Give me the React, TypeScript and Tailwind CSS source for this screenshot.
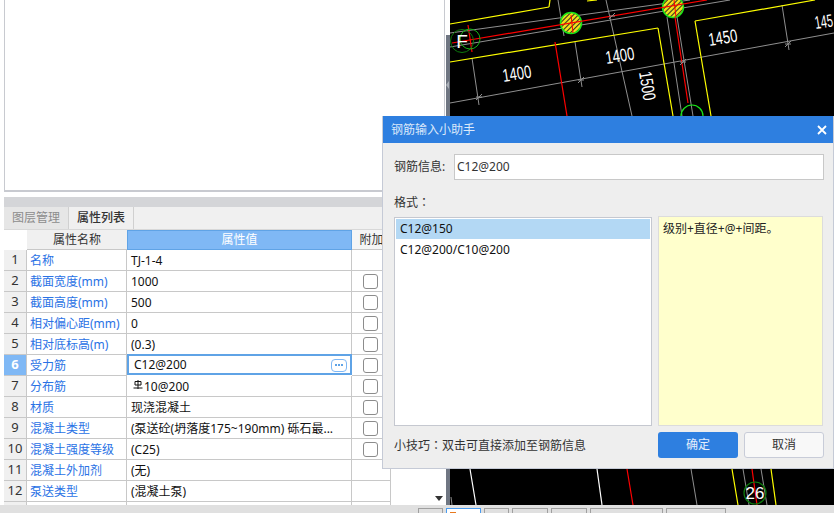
const font = { fontFamily: '"Noto Sans", "Noto Sans CJK SC", sans-serif' };

const rows: [string, string, boolean][] = [
  ["名称", "TJ-1-4", false],
  ["截面宽度(mm)", "1000", true],
  ["截面高度(mm)", "500", true],
  ["相对偏心距(mm)", "0", true],
  ["相对底标高(m)", "(0.3)", true],
  ["受力筋", "C12@200", true],
  ["分布筋", "10@200", true],
  ["材质", "现浇混凝土", true],
  ["混凝土类型", "(泵送砼(坍落度175~190mm) 砾石最...", true],
  ["混凝土强度等级", "(C25)", true],
  ["混凝土外加剂", "(无)", false],
  ["泵送类型", "(混凝土泵)", false],
];

function Canvas() {
  const L = (c: string, p: number[], w = 1) => (
    <line x1={p[0]} y1={p[1]} x2={p[2]} y2={p[3]} stroke={c} strokeWidth={w} />
  );
  const yellow = [
    [450, 24, 549, 7], [549, 7, 550, 0], [587, 1, 597, 0], [450, 62, 658, 28], [658, 28, 673, 116],
    [695, 21, 815, 0], [695, 21, 711, 116], [732, 469, 738, 505], [771, 469, 776, 505],
  ];
  const gray = [
    [450, 33, 690, 0], [450, 47, 730, 0], [450, 103, 834, 33], [472, 58, 479, 105], [575, 42, 582, 87],
    [606, 0, 632, 116], [782, 5, 789, 50], [667, 17, 682, 116], [677, 17, 693, 116], [558, 0, 564, 36],
    [691, 469, 697, 505], [743, 469, 749, 505], [761, 469, 767, 505], [451, 497, 452, 505],
  ];
  const red = [
    [452, 43, 707, 0], [555, 42, 567, 116], [675, 17, 688, 103], [468, 25, 472, 52], [627, 469, 633, 505], [752, 469, 757, 505],
  ];
  const white = [[470, 469, 476, 505], [597, 469, 602, 505]];
  const nums: [string, number, number, number, number][] = [
    ["1400", 517, 75, -9, 29],
    ["1400", 620, 57, -9, 29],
    ["1450", 723, 39, -9, 29],
    ["1500", 646, 86, 81, 29],
    ["145", 824, 23, -9, 18],
  ];
  return (
    <svg className="absolute left-0 top-0" width="834" height="505" viewBox="0 0 834 505">
      <defs>
        <pattern id="hatch" width="3.5" height="3.5" patternUnits="userSpaceOnUse" patternTransform="rotate(-45)">
          <rect width="3.5" height="3.5" fill="#222" />
          <rect width="3.5" height="2.5" fill="#f2e21a" />
        </pattern>
      </defs>
      <rect x="450" y="0" width="384" height="505" fill="#000" />
      {gray.map((p, i) => <g key={i}>{L("#8f8f8f", p)}</g>)}
      {yellow.map((p, i) => <g key={i}>{L("#ffff00", p, 1.2)}</g>)}
      {white.map((p, i) => <g key={i}>{L("#ffffff", p, 1.2)}</g>)}
      <circle cx="571" cy="23" r="10.5" fill="url(#hatch)" stroke="#19e619" strokeWidth="1.5" />
      <circle cx="673" cy="7" r="10.5" fill="url(#hatch)" stroke="#19e619" strokeWidth="1.5" />
      {red.map((p, i) => <g key={i}>{L("#ff0000", p, 1.2)}</g>)}
      <line x1="571" y1="15" x2="573" y2="33" stroke="#ff0000" />
      <line x1="674" y1="0" x2="676" y2="17" stroke="#ff0000" />
      <circle cx="462" cy="41" r="11.5" fill="none" stroke="#0d7a0d" />
      <circle cx="470" cy="39" r="10" fill="none" stroke="#16b016" />
      <circle cx="692" cy="116" r="11" fill="none" stroke="#19e619" strokeWidth="1.2" />
      <circle cx="755" cy="493" r="11" fill="none" stroke="#0d7a0d" strokeWidth="1.2" />
      <text x="462" y="48" fontSize="19" fill="#fff" textAnchor="middle" fontFamily="Liberation Sans">F</text>
      <text x="755" y="499" fontSize="17" fill="#fff" textAnchor="middle" fontFamily="Liberation Sans">26</text>
      {nums.map(([t, x, y, r, w], i) => (
        <text key={i} transform={`translate(${x} ${y}) rotate(${r})`} fontSize="18" fill="#fff" textAnchor="middle" dominantBaseline="middle" textLength={w} lengthAdjust="spacingAndGlyphs" fontFamily="Liberation Sans">{t}</text>
      ))}
      {[[479, 97], [581, 80], [683, 62], [788, 44], [612, 16]].map(([x, y], i) => (
        <g key={i} stroke="#8f8f8f">
          <line x1={x - 3} y1={y + 3} x2={x + 3} y2={y - 3} />
          <line x1={x - 3} y1={y} x2={x + 3} y2={y} />
        </g>
      ))}
    </svg>
  );
}

function Rebar() {
  return (
    <svg width="10" height="10" viewBox="0 0 10 10" className="ml-[2px] mr-px shrink-0 -translate-y-[2px]" fill="none" stroke="#111" strokeWidth="1">
      <path d="M2 1.5v3.5h6v-3.5z" />
      <path d="M5 0v9M0.5 8h9" />
    </svg>
  );
}

function Row({ r, i }: { r: [string, string, boolean]; i: number }) {
  const active = i === 5;
  return (
    <div className="grid h-[21px] shrink-0 grid-cols-[23px_100px_225px_39px]">
      <div className={`flex items-center justify-center border-b border-r border-[#c8c8c8] text-[13px] ${active ? "bg-[#7fb8f5] font-bold text-white" : "bg-[#f0f0f0] text-[#333]"}`}>{i + 1}</div>
      <div className="flex items-center overflow-hidden whitespace-nowrap border-b border-r border-[#c8c8c8] pl-[3px] pt-px text-[#2a72e5]">{r[0]}</div>
      {active ? (
        <div className="-mt-px flex h-[21px] items-center justify-between border-2 border-[#5fa3e6] pl-[5px] pr-[3px] pt-px text-[#111]">
          <span>{r[1]}</span>
          <span className="flex h-[13px] w-[16px] items-center justify-center gap-px rounded-sm border border-[#7fb8f5]">
            <i className="h-[2px] w-[2px] bg-[#5fa3e6]" />
            <i className="h-[2px] w-[2px] bg-[#5fa3e6]" />
            <i className="h-[2px] w-[2px] bg-[#5fa3e6]" />
          </span>
        </div>
      ) : (
        <div className="flex items-center overflow-hidden whitespace-nowrap border-b border-r border-[#c8c8c8] pl-[4px] pt-px text-[#111]">
          {i === 6 && <Rebar />}
          {r[1]}
        </div>
      )}
      <div className="flex items-center justify-start border-b border-r border-[#c8c8c8] pl-[11px]">
        {r[2] && <span className="h-[15px] w-[15px] rounded-[3px] border border-[#8c8c8c] bg-white" />}
      </div>
    </div>
  );
}

function LeftPanel() {
  return (
    <div className="relative z-10 flex h-[505px] w-[450px] shrink-0 flex-col bg-white pl-1 pr-[5px]">
      <div className="h-[192px] shrink-0 border-b-2 border-l border-r border-[#c8cad0]" />
      <div className="mt-[5px] h-[10px] shrink-0 bg-[#d4d5d8]" />
      <div className="flex h-[23px] shrink-0 border-b border-[#d8d8d8] bg-[#f0f0f0] text-[12px]">
        <div className="flex w-[65px] items-center justify-center border-r border-[#d0d0d0] bg-[#e6e6e6] text-[#8c8c8c]">图层管理</div>
        <div className="flex w-[65px] items-center justify-center border-r border-[#d0d0d0] font-medium text-[#333]">属性列表</div>
      </div>
      <div className="flex-1 overflow-hidden text-[12px]">
        <div className="grid h-[20px] grid-cols-[23px_100px_225px_39px]">
          <div />
          <div className="flex items-center justify-center border-b border-[#c8c8c8] bg-[#f0f0f0] text-[#333]">属性名称</div>
          <div className="flex items-center justify-center border border-[#5fa3e6] bg-[#7fb8f5] text-white">属性值</div>
          <div className="flex items-center justify-center whitespace-nowrap border-b border-[#c8c8c8] bg-[#f5f5f5] text-[#333]">附加</div>
        </div>
        {rows.map((r, i) => <Row key={i} r={r} i={i} />)}
        <div className="grid h-[21px] grid-cols-[23px_100px_225px_39px]">
          <div className="border-r border-[#c8c8c8] bg-[#f0f0f0]" />
          <div className="border-r border-[#c8c8c8]" />
          <div className="border-r border-[#c8c8c8]" />
          <div className="border-r border-[#c8c8c8]" />
        </div>
      </div>
      <span className="absolute right-[7px] top-[496px] h-0 w-0 border-x-[4px] border-t-[5px] border-x-transparent border-t-[#333]" />
      <div className="absolute right-0 top-[35px] h-[470px] w-[4px] bg-[#6f7682]">
        <span className="absolute left-0 top-[46px] h-0 w-0 border-y-[4px] border-r-[3px] border-y-transparent border-r-[#aab0b8]" />
      </div>
    </div>
  );
}

function BottomBar() {
  return (
    <div className="flex h-[8px] shrink-0 items-start gap-[3px] bg-[#e0e0e0] pt-[3px]">
      <div className="ml-[418px] h-[8px] w-[25px] border border-b-0 border-[#a0a0a0]" />
      <div className="h-[8px] w-[35px] border border-b-0 border-[#4a9cf0] bg-white pl-[3px] pt-[3px]"><div className="h-[2px] w-[6px] bg-[#e8791e]" /></div>
      <div className="h-[8px] w-[25px] border border-b-0 border-[#a0a0a0]" />
      <div className="h-[8px] w-[36px] border border-b-0 border-[#a0a0a0]" />
      <div className="h-[8px] w-[36px] border border-b-0 border-[#a0a0a0]" />
      <div className="h-[8px] w-[73px] border border-b-0 border-[#a0a0a0]" />
      <div className="h-[8px] w-[60px] border border-b-0 border-[#a0a0a0]" />
    </div>
  );
}

function Dialog() {
  const colon = <span className="font-['Noto_Sans_CJK_TC']">：</span>;
  return (
    <div className="absolute left-[382px] top-[116px] z-20 flex h-[353px] w-[452px] flex-col border border-t-0 border-[#c5cad6] bg-[#eeeeee] text-[12px] text-[#333]">
      <div className="flex h-[27px] shrink-0 items-center justify-between bg-[#2e7fe0] pl-2 pr-[6px] text-white">
        <span className="text-[#dbe8fa]">钢筋输入小助手</span>
        <svg width="10" height="10" viewBox="0 0 10 10" stroke="#fff" strokeWidth="1.8"><path d="M1 1l8 8M9 1l-8 8" /></svg>
      </div>
      <div className="flex flex-1 flex-col pl-[11px] pr-[9px]">
        <div className="mt-[11px] flex h-[26px] items-center">
          <span className="w-[60px]">钢筋信息:</span>
          <div className="flex h-[26px] flex-1 items-center border border-[#c8c8c8] bg-white pl-[2px]">C12@200</div>
        </div>
        <div className="mt-[13px] h-[18px] leading-[18px]">格式{colon}</div>
        <div className="mt-[5px] flex h-[210px] gap-[6px]">
          <div className="mt-px w-[258px] border border-[#c5c8d0] bg-white p-px">
            <div className="flex h-[20px] items-center bg-[#b3d8f4] pl-1 text-[#111]">C12@150</div>
            <div className="mt-px flex h-[20px] items-center pl-1 text-[#111]">C12@200/C10@200</div>
          </div>
          <div className="w-[165px] border border-[#dcdcdc] bg-[#ffffcc] pl-1 pt-[3px] leading-[18px] text-[#222]">级别+直径+@+间距。</div>
        </div>
        <div className="mt-[6px] flex h-[26px] items-center">
          <span className="flex-1">小技巧{colon}双击可直接添加至钢筋信息</span>
          <button className="h-[26px] w-[80px] rounded-[3px] bg-[#2e7fe0] text-[#e4eefc]">确定</button>
          <button className="ml-[6px] h-[26px] w-[80px] rounded-[3px] border border-[#c8ccd8] bg-[#f8f8f8] text-[#333]">取消</button>
        </div>
      </div>
    </div>
  );
}

export default function App() {
  return (
    <div className="relative flex h-[513px] w-[834px] flex-col overflow-hidden bg-white" style={font}>
      <div className="relative flex h-[505px] shrink-0">
        <Canvas />
        <LeftPanel />
      </div>
      <BottomBar />
      <Dialog />
    </div>
  );
}
